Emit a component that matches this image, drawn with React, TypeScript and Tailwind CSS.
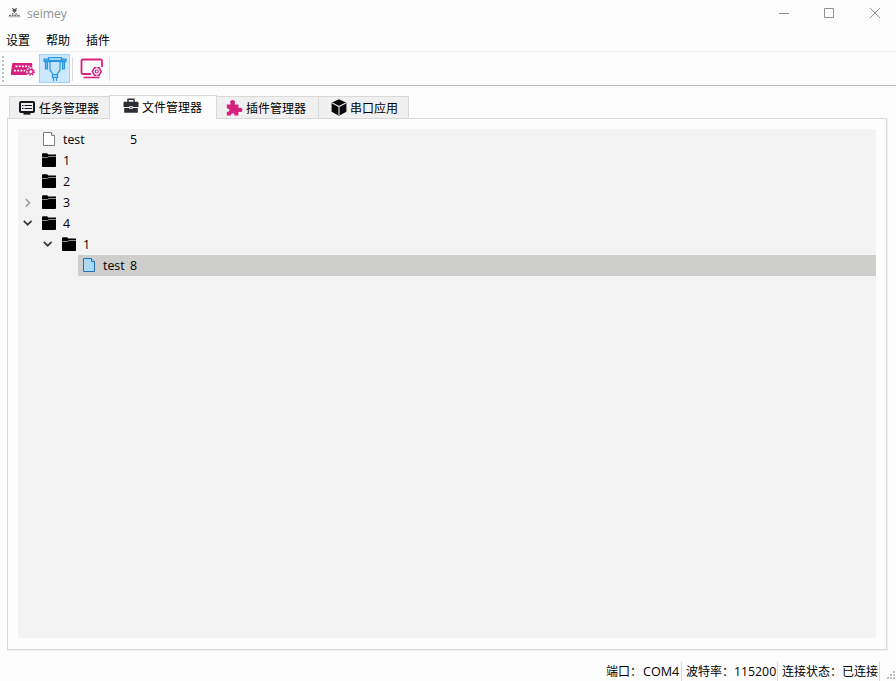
import React from 'react';

function AppLogo() {
  return (
    <svg className="mt-[7px] h-[12px] w-[13px] shrink-0" viewBox="0 0 13 12">
      <path d="M4.2 1.5h1.2M7.6 1.5h1.2M5 2.4h3v1.8H5z" stroke="#555" strokeWidth="1" fill="#444" />
      <path d="M6.5 4v2M4 6.8h1.6M7.4 6.8H9" stroke="#666" strokeWidth="1.2" fill="none" />
      <path d="M1 8.5h11" stroke="#777" strokeWidth="1.5" strokeDasharray="2 .6" />
      <path d="M.5 9.8h12" stroke="#aaa" strokeWidth="1" />
    </svg>
  );
}

function PortSettingsIcon() {
  return (
    <svg className="h-[16px] w-[26px]" viewBox="0 0 26 16">
      <path d="M3.2 2h18q1.2 0 1.1 1l-.8 11H1.8q-1.1 0-1-1L2.1 3q.1-1 1.1-1z" fill="#d6217f" />
      <path d="M5.5 5.3h14M4 9.6h11" stroke="#fff" strokeWidth="1.7" strokeDasharray="1.9 1.3" />
      <circle cx="20.8" cy="10.7" r="4.5" fill="#fff" />
      <circle cx="20.8" cy="10.7" r="2.3" fill="none" stroke="#d6217f" strokeWidth="1.5" />
      <circle cx="20.8" cy="10.7" r="3.5" fill="none" stroke="#d6217f" strokeWidth="1.3" strokeDasharray="1.4 1.35" />
    </svg>
  );
}

function ConnectorIcon() {
  return (
    <svg className="h-[26px] w-[24px]" viewBox="0 0 24 26" fill="none" stroke="#2b94dc" strokeWidth="1.2">
      <path d="M5.5 1.5h13v3h-13z" fill="#9bd5fb" />
      <path d="M1 3.2h4.5v2H1zM18.5 3.2H23v2h-4.5z" fill="#79c3f3" />
      <path d="M1 5.5h22" strokeWidth="1.6" />
      <path d="M2.5 6h2v7h-2zM19.5 6h2v7h-2z" fill="#79c3f3" />
      <path d="M7 6v8.2l3.2 4.3h3.6l3.2-4.3V6" fill="#c2e5fc" />
      <path d="M9.5 18.5h5v3h-5zM10.5 21.5V25M13.5 21.5V25" fill="#9bd5fb" />
    </svg>
  );
}

function ScreenSettingsIcon() {
  return (
    <svg className="h-[21px] w-[23px]" viewBox="0 0 23 21" fill="none" stroke="#d6217f">
      <path d="M11 16H3Q1.5 16 1.5 14.5V3Q1.5 1.5 3 1.5h17.5Q22 1.5 22 3v6" strokeWidth="1.8" />
      <path d="M3.5 19.5h16" strokeWidth="1.6" />
      <path d="M14.5 9.8h4.6l2.2 3.7-2.2 3.7h-4.6l-2.2-3.7z" strokeWidth="1.5" />
      <circle cx="16.8" cy="13.5" r="1.5" strokeWidth="1.2" />
      <path d="M16.8 9v2.2M16.8 15.8V18" strokeWidth=".8" stroke="#fff" />
    </svg>
  );
}

function TaskIcon() {
  return (
    <svg className="h-[14px] w-[16px]" viewBox="0 0 16 14">
      <rect x="1" y="1" width="14" height="10" rx=".8" fill="#f0f0f0" stroke="#15151c" strokeWidth="2" />
      <path d="M3 4.5h1.5M3 7.5h1.5M5.5 4.5H13M5.5 7.5H13" stroke="#15151c" strokeWidth="1.2" />
      <path d="M4.5 12.8h7" stroke="#15151c" strokeWidth="1.6" />
    </svg>
  );
}

function BriefcaseIcon() {
  return (
    <svg className="h-[16px] w-[16px]" viewBox="0 0 16 16">
      <path d="M5 4V1.2h6V4" fill="none" stroke="#2d2d32" strokeWidth="1.4" />
      <path d="M1.5 3.8h13q1 0 1 1V9H9.6V8H6.4v1H.5V4.8q0-1 1-1z" fill="#2d2d32" />
      <path d="M1.2 10h5.2v1h3.2v-1h5.2v4.8H1.2z" fill="#2d2d32" />
      <path d="M7.2 8.8h1.6v1.4H7.2z" fill="#2d2d32" />
    </svg>
  );
}

function PuzzleIcon() {
  return (
    <svg className="h-[16px] w-[17px]" viewBox="0 0 17 16">
      <path d="M.8 4.5h3.4c.6 0 .5-.6.2-1.1C3.5 1.7 4.7.1 6.6.1s3.1 1.6 2.2 3.3c-.3.5-.4 1.1.2 1.1h3.4v2.7c0 .8.6.9 1.1.7 1.7-.7 3 .6 3 2s-1.3 2.7-3 2c-.5-.2-1.1-.1-1.1.7v2.9H8.9c-.5 0-.5-.4-.4-.8.2-1.6-3.6-1.6-3.4 0 .1.4 0 .8-.5.8H.8v-3.2c0-.5.3-.6.8-.5 2.4.4 2.4-3.7 0-3.3-.5.1-.8 0-.8-.5z" fill="#d6217f" />
    </svg>
  );
}

function CubeIcon() {
  return (
    <svg className="h-[17px] w-[16px]" viewBox="0 0 16 17">
      <path d="M8 .3l7.4 3.5v8.9L8 16.7.6 12.7V3.8z" fill="#08080b" />
      <path d="M1.2 4.1L8 7.6l6.8-3.5M8 7.6v8.6" stroke="#e5e5e5" strokeWidth="1.1" fill="none" />
    </svg>
  );
}

function FolderIcon() {
  return (
    <svg className="mb-[2px] h-[14px] w-[14px]" viewBox="0 0 14 14">
      <path d="M0 1.5Q0 .3 1 .3h4L6.5 1.6H14v11.6q0 .8-.8.8H.8q-.8 0-.8-.8z" fill="#000" />
      <path d="M0 4.5h5.5L7 3.5h7" stroke="#8b8b90" fill="none" />
    </svg>
  );
}

function FileIcon({ selected = false }: { selected?: boolean }) {
  return (
    <svg className="mb-[2px] h-[14px] w-[12px]" viewBox="0 0 12 14" fill={selected ? '#add9f5' : '#fff'} stroke={selected ? '#2272b4' : '#7e7e7e'}>
      <path d="M.5.5h8l3 3v10H.5z" />
      <path d="M8.5.5v3h3" />
    </svg>
  );
}

function Arrow({ open }: { open: boolean }) {
  return open ? (
    <svg className="mb-[2px] ml-[1px] h-[10px] w-[10px]" viewBox="0 0 10 10">
      <path d="M.8 2.8l3.9 3.9 3.9-3.9" fill="none" stroke="#3e383e" strokeWidth="1.7" />
    </svg>
  ) : (
    <svg className="ml-[1px] h-[10px] w-[10px]" viewBox="0 0 10 10">
      <path d="M2.8 1l3.8 3.8-3.8 3.8" fill="none" stroke="#a2a2a2" strokeWidth="1.7" />
    </svg>
  );
}

const folders = [
  { name: '1', pad: 'pl-[4px]', open: undefined },
  { name: '2', pad: 'pl-[4px]', open: undefined },
  { name: '3', pad: 'pl-[4px]', open: false },
  { name: '4', pad: 'pl-[4px]', open: true },
  { name: '1', pad: 'pl-[24px]', open: true },
];

const tabText = 'h-[18px] leading-[20px] whitespace-nowrap';

export default function App() {
  return (
    <div className="flex h-[681px] w-[896px] flex-col overflow-hidden bg-[#fdfdfd] text-[12px] text-black [font-family:'Open_Sans','Noto_Sans_CJK_SC',sans-serif]">
      <header className="flex h-[27px] shrink-0 pl-[8px]">
        <AppLogo />
        <span className="ml-[6px] text-[12.2px] leading-[28px] text-[#929292]">seimey</span>
        <svg className="ml-auto h-[27px] w-[136px]" viewBox="0 0 136 27" fill="none" stroke="#929292">
          <path d="M19 13.5h10" />
          <path d="M64.5 8.5h9v9h-9z" />
          <path d="M110 8l10 10M120 8l-10 10" />
        </svg>
      </header>
      <nav className="flex h-[25px] shrink-0 gap-[16px] border-b border-[#f0f0f0] pl-[6px] leading-[28px]">
        <span>设置</span>
        <span>帮助</span>
        <span>插件</span>
      </nav>
      <div className="flex h-[34px] shrink-0 items-start border-b border-[#bdbdbd]">
        <svg className="mt-[4px] ml-[2px] h-[27px] w-[2px]" viewBox="0 0 2 27">
          <path d="M1 0v27" stroke="#c2c2c2" strokeWidth="2" strokeDasharray="2 2" />
        </svg>
        <div className="mt-[9px] ml-[6px]"><PortSettingsIcon /></div>
        <div className="mt-[2px] ml-[3px] flex h-[29px] w-[31px] items-center justify-center border border-[#99d1ff] bg-[#cce8ff]">
          <ConnectorIcon />
        </div>
        <div className="mt-[5px] ml-[2px] h-[24px] w-px bg-[#dcdcdc]" />
        <div className="mt-[6px] ml-[7px]"><ScreenSettingsIcon /></div>
        <div className="mt-[5px] ml-[6px] h-[24px] w-px bg-[#dcdcdc]" />
      </div>

      <main className="flex h-[564px] shrink-0 flex-col pt-[9px] pr-[9px] pl-[7px]">
        <div className="z-10 -mb-px flex h-[24px] shrink-0 items-end pl-[2px]">
          <div className="flex h-[23px] w-[100px] items-center border border-r-0 border-[#d9d9d9] bg-[#f0f0f0] pl-[9px]">
            <TaskIcon /><span className={`ml-[4px] ${tabText}`}>任务管理器</span>
          </div>
          <div className="flex h-[24px] w-[108px] items-start border border-b-0 border-[#d9d9d9] bg-[#fdfdfd] pl-[13px]">
            <div className="mt-[2px]"><BriefcaseIcon /></div><span className={`ml-[3px] mt-[2px] ${tabText}`}>文件管理器</span>
          </div>
          <div className="flex h-[23px] w-[102px] items-center border border-l-0 border-[#d9d9d9] bg-[#f0f0f0] pl-[9px]">
            <PuzzleIcon /><span className={`ml-[3px] ${tabText}`}>插件管理器</span>
          </div>
          <div className="flex h-[23px] w-[90px] items-center border border-l-0 border-[#d9d9d9] bg-[#f0f0f0] pl-[12px]">
            <CubeIcon /><span className={`ml-[3px] ${tabText}`}>串口应用</span>
          </div>
        </div>
        <section className="h-[532px] w-[880px] shrink-0 border border-[#d9d9d9] bg-[#fdfdfd] p-[10px] shadow-[1px_1px_0_#f0f0f0]">
          <div className="h-[509px] rounded-[1px] bg-[#f3f3f3] text-[12.4px] leading-[21px]">
            <div className="flex h-[21px] items-center pl-[25px]">
              <FileIcon /><span className="ml-[8px] w-[67px]">test</span><span>5</span>
            </div>
            {folders.map((f, i) => (
              <div key={i} className={`flex h-[21px] items-center ${f.pad}`}>
                <div className="w-[20px]">{f.open !== undefined && <Arrow open={f.open} />}</div>
                <FolderIcon />
                <span className="ml-[7px]">{f.name}</span>
              </div>
            ))}
            <div className="ml-[60px] flex h-[21px] items-center bg-[#cececc] pl-[5px]">
              <FileIcon selected /><span className="ml-[8px] w-[27px]">test</span><span>8</span>
            </div>
          </div>
        </section>
      </main>

      <footer className="flex h-[31px] shrink-0 justify-end pt-[12px] whitespace-nowrap">
        <div className="flex h-[19px] w-[76px] border-r border-[#d9d9d9] leading-[19px]">
          <span className="w-[37px]">端口：</span><span className="text-[12.6px]">COM4</span>
        </div>
        <div className="flex h-[19px] w-[96px] border-r border-[#d9d9d9] pl-[4px] leading-[19px]">
          <span className="w-[48px]">波特率：</span><span className="text-[12.3px]">115200</span>
        </div>
        <div className="flex h-[19px] w-[102px] border-r border-[#d9d9d9] pl-[4px] leading-[19px]">
          <span className="w-[60px]">连接状态：</span><span>已连接</span>
        </div>
        <svg className="h-[19px] w-[16px]" viewBox="0 0 16 19" fill="#bfbfbf">
          <path d="M13 9h2v2h-2zM10 12h2v2h-2zM13 12h2v2h-2zM7 15h2v2H7zM10 15h2v2h-2zM13 15h2v2h-2z" />
        </svg>
      </footer>
    </div>
  );
}
